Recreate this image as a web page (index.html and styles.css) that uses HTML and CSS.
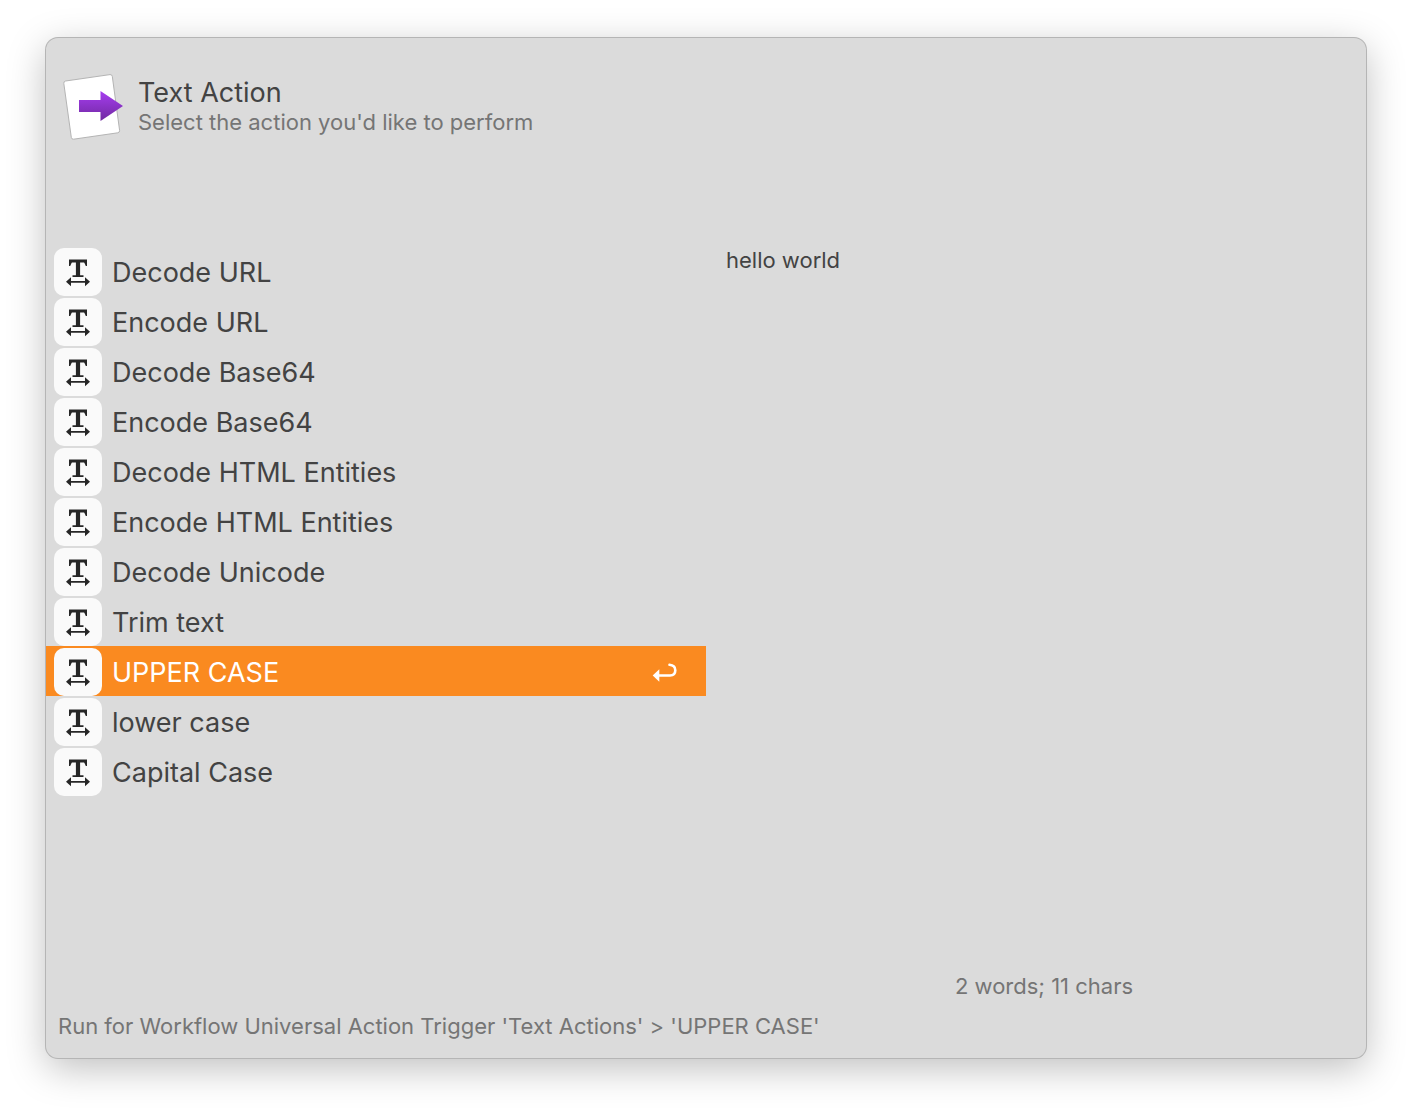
FILE: index.html
```
<!DOCTYPE html>
<html lang="en">
<head>
<meta charset="utf-8">
<title>Text Action</title>
<link rel="stylesheet" href="styles.css">
</head>
<body>
<svg class="symbols" aria-hidden="true">
  <symbol id="text-tool" viewBox="0 0 48 48">
    <g fill="none" stroke="#262626">
      <path d="M15 13H33" stroke-width="3"/>
      <path d="M24 13V28" stroke-width="4.200"/>
      <path d="M18.500 28.200H29.500" stroke-width="1.800"/>
      <path d="M16 33.800H32" stroke-width="1.800"/>
    </g>
    <path d="M15 13V18H16.200L18 14ZM33 13V18H31.800L30 14Z" fill="#262626"/>
    <path d="M12 33.800L17 29.300V38.300ZM36 33.800L31 29.300V38.300Z" fill="#262626"/>
  </symbol>
</svg>
<main class="window">
  <header class="header">
    <svg class="logo" viewBox="0 0 64 68" aria-hidden="true">
      <defs>
        <linearGradient id="arrow" x1="0" y1="0" x2="0" y2="1">
          <stop offset="0" stop-color="#a63df0"/>
          <stop offset="1" stop-color="#7029a0"/>
        </linearGradient>
      </defs>
      <path d="M5.6 8L50 1.6Q52 1.400 52.300 3.400L59.600 57.400Q59.800 59.400 57.800 59.800L13.600 66.200Q11.600 66.400 11.300 64.400L3.800 10.400Q3.600 8.400 5.600 8Z" fill="#fff" stroke="#b4b4b4"/>
      <path d="M19 27H40.500V18L63 33L40.500 48V39H19Z" fill="url(#arrow)"/>
    </svg>
    <div class="heading">
      <h1 class="title">Text Action</h1>
      <p class="subtitle">Select the action you'd like to perform</p>
    </div>
  </header>
  <div class="content">
    <ul class="actions">
      <li><button class="action" type="button"><svg class="tile" aria-hidden="true"><use href="#text-tool"/></svg><span>Decode URL</span></button></li>
      <li><button class="action" type="button"><svg class="tile" aria-hidden="true"><use href="#text-tool"/></svg><span>Encode URL</span></button></li>
      <li><button class="action" type="button"><svg class="tile" aria-hidden="true"><use href="#text-tool"/></svg><span>Decode Base64</span></button></li>
      <li><button class="action" type="button"><svg class="tile" aria-hidden="true"><use href="#text-tool"/></svg><span>Encode Base64</span></button></li>
      <li><button class="action" type="button"><svg class="tile" aria-hidden="true"><use href="#text-tool"/></svg><span>Decode HTML Entities</span></button></li>
      <li><button class="action" type="button"><svg class="tile" aria-hidden="true"><use href="#text-tool"/></svg><span>Encode HTML Entities</span></button></li>
      <li><button class="action" type="button"><svg class="tile" aria-hidden="true"><use href="#text-tool"/></svg><span>Decode Unicode</span></button></li>
      <li><button class="action" type="button"><svg class="tile" aria-hidden="true"><use href="#text-tool"/></svg><span>Trim text</span></button></li>
      <li><button class="action selected" type="button"><svg class="tile" aria-hidden="true"><use href="#text-tool"/></svg><span>UPPER CASE</span><svg class="return" viewBox="0 0 26 22" aria-hidden="true"><path d="M6 14.500H18Q23.300 14.300 23.300 9.200Q23.300 4.300 17.500 3.800" fill="none" stroke="#fff" stroke-width="2.600" stroke-linecap="round"/><path d="M0.700 14.500L7.300 8.300V20.700Z" fill="#fff"/></svg></button></li>
      <li><button class="action" type="button"><svg class="tile" aria-hidden="true"><use href="#text-tool"/></svg><span>lower case</span></button></li>
      <li><button class="action" type="button"><svg class="tile" aria-hidden="true"><use href="#text-tool"/></svg><span>Capital Case</span></button></li>
    </ul>
    <section class="preview">
      <p class="sample">hello world</p>
      <p class="count">2 words; 11 chars</p>
    </section>
  </div>
  <footer class="status">Run for Workflow Universal Action Trigger 'Text Actions' &gt; 'UPPER CASE'</footer>
</main>
</body>
</html>
```
FILE: styles.css
```
* { box-sizing: border-box; }
body {
  margin: 0;
  min-height: 100vh;
  padding: 38px 46px 54px;
  display: flex;
  background: #fff;
  color: #434343;
  font-family: Inter, "Liberation Sans", sans-serif;
}
h1, p, ul { margin: 0; padding: 0; }
ul { list-style: none; }
.symbols { position: absolute; width: 0; height: 0; }
.window {
  flex: 1;
  min-width: 0;
  display: flex;
  flex-direction: column;
  background: #dbdbdb;
  border-radius: 12px;
  box-shadow: 0 0 0 1px #b5b5b5, 0 10px 38px rgba(0, 0, 0, 0.26);
}
.header {
  display: flex;
  gap: 14px;
  padding: 35px 14px 0;
  height: 208px;
}
.logo { width: 64px; height: 68px; flex: none; }
.heading { padding-top: 4px; }
.title {
  font-size: 27px;
  line-height: 32px;
  font-weight: 400;
}
.subtitle, .sample, .count, .status {
  font-size: 22px;
  line-height: 28px;
}
.subtitle, .count, .status { color: #757575; }
.subtitle { line-height: 26px; }
.content {
  flex: 1;
  display: grid;
  grid-template-columns: 1fr 1fr;
}
.action {
  width: 100%;
  height: 50px;
  display: flex;
  align-items: center;
  gap: 10px;
  padding: 2px 28px 0 8px;
  border: 0;
  background: none;
  color: inherit;
  font: 27px Inter, "Liberation Sans", sans-serif;
  text-align: left;
}
.tile {
  flex: none;
  width: 48px;
  height: 48px;
  background: #fafafa;
  border-radius: 10px;
}
.action.selected { background: #fa8a20; color: #fff; }
.return { width: 26px; height: 22px; margin-left: auto; }
.preview {
  display: flex;
  flex-direction: column;
  justify-content: space-between;
  padding: 0 4px 0 20px;
}
.count { text-align: center; }
.status { padding: 12px 12px 18px; }
```
